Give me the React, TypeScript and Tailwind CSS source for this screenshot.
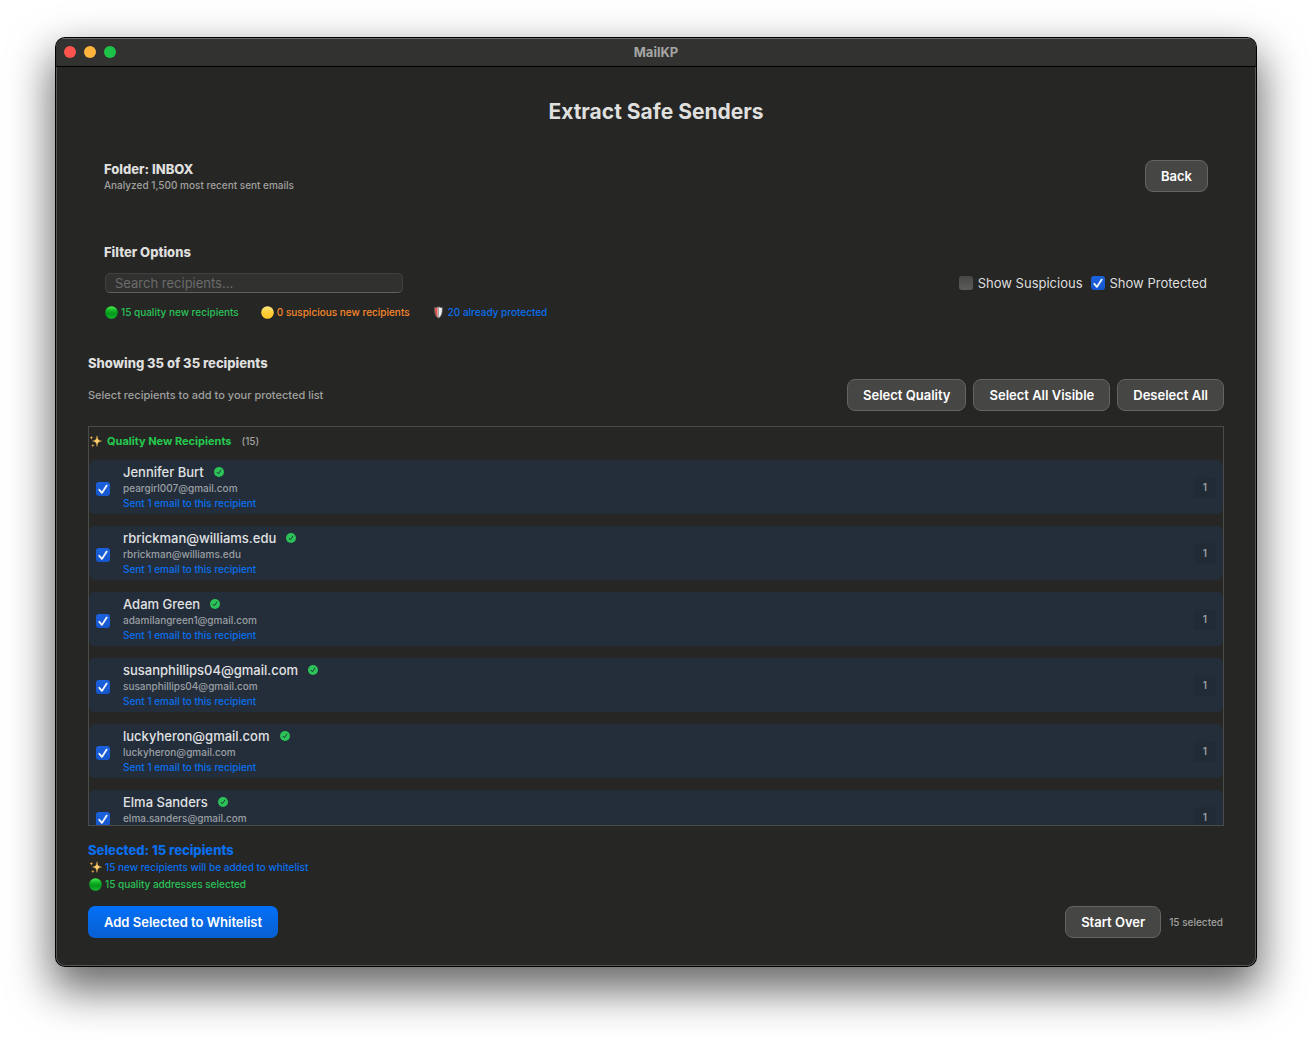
import { useState } from 'react';

type Recipient = { name: string; email: string; sent: number };

const RECIPIENTS: Recipient[] = [
  { name: 'Jennifer Burt', email: 'peargirl007@gmail.com', sent: 1 },
  { name: 'rbrickman@williams.edu', email: 'rbrickman@williams.edu', sent: 1 },
  { name: 'Adam Green', email: 'adamilangreen1@gmail.com', sent: 1 },
  { name: 'susanphillips04@gmail.com', email: 'susanphillips04@gmail.com', sent: 1 },
  { name: 'luckyheron@gmail.com', email: 'luckyheron@gmail.com', sent: 1 },
  { name: 'Elma Sanders', email: 'elma.sanders@gmail.com', sent: 1 },
];

function GreenDot() {
  return (
    <svg viewBox="0 0 13 13" className="size-[13px] shrink-0" aria-hidden="true">
      <defs>
        <linearGradient id="green-dot" x1="0" y1="0" x2="0" y2="1">
          <stop offset="0" stopColor="#4bf04f" />
          <stop offset="0.35" stopColor="#12b426" />
          <stop offset="0.6" stopColor="#06961c" />
          <stop offset="1" stopColor="#10b82c" />
        </linearGradient>
      </defs>
      <circle cx="6.5" cy="6.5" r="6.3" fill="url(#green-dot)" />
    </svg>
  );
}

function YellowDot() {
  return (
    <svg viewBox="0 0 13 13" className="size-[13px] shrink-0" aria-hidden="true">
      <defs>
        <linearGradient id="yellow-dot" x1="0" y1="0" x2="0" y2="1">
          <stop offset="0" stopColor="#ffe985" />
          <stop offset="0.5" stopColor="#ffce38" />
          <stop offset="1" stopColor="#ffc526" />
        </linearGradient>
      </defs>
      <circle cx="6.5" cy="6.5" r="6.3" fill="url(#yellow-dot)" />
    </svg>
  );
}

function Shield() {
  return (
    <svg viewBox="0 0 13 13" className="size-[13px] shrink-0" aria-hidden="true">
      <path d="M6.5 0.2 C5.2 1 3.6 1.3 2 1.2 C1.8 6 2.4 10.2 6.5 12.8 C10.6 10.2 11.2 6 11 1.2 C9.4 1.3 7.8 1 6.5 0.2Z" fill="#5a5a5a" />
      <path d="M6.2 1.2 C5.2 1.8 4.2 2 3 2 C2.9 6 3.4 9.6 6.2 11.8Z" fill="#e8524a" />
      <path d="M6.8 1.2 C7.8 1.8 8.8 2 10 2 C10.1 6 9.6 9.6 6.8 11.8Z" fill="#ececec" />
      <path d="M5.4 1.6 H6.6 V11.6 L5.4 10.8Z" fill="#c9cccd" />
    </svg>
  );
}

function Sparkles() {
  return (
    <svg viewBox="0 0 13 13" className="size-[13px] shrink-0" aria-hidden="true">
      <path d="M8 0.8 C8.5 4.6 9 5.4 12.6 6.1 C9 6.8 8.5 7.6 8 11.4 C7.5 7.6 7 6.8 3.6 6.1 C7 5.4 7.5 4.6 8 0.8Z" fill="#ffd070" stroke="#ffc850" strokeWidth="0.4" />
      <path d="M2.4 0.6 C2.6 2.2 2.9 2.5 4.4 2.8 C2.9 3.1 2.6 3.4 2.4 5 C2.2 3.4 1.9 3.1 0.4 2.8 C1.9 2.5 2.2 2.2 2.4 0.6Z" fill="#f0a94a" />
      <path d="M3.9 8.4 C4.1 9.8 4.4 10.1 5.8 10.4 C4.4 10.7 4.1 11 3.9 12.4 C3.7 11 3.4 10.7 2 10.4 C3.4 10.1 3.7 9.8 3.9 8.4Z" fill="#e2a04a" />
    </svg>
  );
}

function VerifiedIcon() {
  return (
    <svg viewBox="0 0 10 10" className="size-[10px] shrink-0" aria-hidden="true">
      <circle cx="5" cy="5" r="5" fill="#2bc257" />
      <path d="M3.1 5.3 L4.4 6.8 L6.8 3.2" fill="none" stroke="#1f3a36" strokeWidth="1" strokeLinecap="round" strokeLinejoin="round" />
    </svg>
  );
}

type CheckboxProps = {
  id: string;
  label?: string;
  checked: boolean;
  onChange: (checked: boolean) => void;
};

function Checkbox({ id, label, checked, onChange }: CheckboxProps) {
  return (
    <span className="grid size-[14px] shrink-0">
      <input
        id={id}
        type="checkbox"
        aria-label={label}
        checked={checked}
        onChange={(e) => onChange(e.target.checked)}
        className="peer col-start-1 row-start-1 size-[14px] appearance-none rounded-[3px] bg-linear-to-b from-[#484847] to-[#5c5c5b] checked:from-[#1c62df] checked:to-[#1556cc]"
      />
      <svg
        viewBox="0 0 14 14"
        className="pointer-events-none invisible col-start-1 row-start-1 size-[14px] peer-checked:visible"
        aria-hidden="true"
      >
        <path d="M3.3 7.8 L5.9 10.9 L10.7 3.6" fill="none" stroke="#f4f6fb" strokeWidth="1.8" strokeLinecap="round" strokeLinejoin="round" />
      </svg>
    </span>
  );
}

function Button({ children, onClick }: { children: string; onClick?: () => void }) {
  return (
    <button
      type="button"
      onClick={onClick}
      className="h-8 rounded-[8px] border border-[#646463] bg-[#464645] px-[15px] text-[13px] leading-4 font-semibold text-white"
    >
      {children}
    </button>
  );
}

type RowProps = {
  recipient: Recipient;
  checked: boolean;
  onChange: (checked: boolean) => void;
};

function RecipientRow({ recipient, checked, onChange }: RowProps) {
  return (
    <li className="flex items-center gap-[13px] rounded-md bg-[#242e3a] px-[7px] py-1">
      <div className="pt-1">
        <Checkbox id={recipient.email} label={recipient.name} checked={checked} onChange={onChange} />
      </div>
      <div className="flex min-w-0 flex-1 flex-col gap-0.5">
        <div className="flex items-center gap-[10px]">
          <span className="text-[13px] leading-4 font-medium text-[#e0e2e4]">{recipient.name}</span>
          <VerifiedIcon />
        </div>
        <span className="text-[10px] leading-[13px] font-medium text-[#9a9fa4]">{recipient.email}</span>
        <span className="text-[10px] leading-[13px] font-medium text-[#0a6fee]">
          Sent {recipient.sent} email to this recipient
        </span>
      </div>
      <span className="rounded-[3px] bg-[#212b35] px-[9px] py-1 text-[10px] leading-[13px] font-semibold text-[#9a9fa4]">
        {recipient.sent}
      </span>
    </li>
  );
}

export default function App() {
  const [search, setSearch] = useState('');
  const [showSuspicious, setShowSuspicious] = useState(false);
  const [showProtected, setShowProtected] = useState(true);
  const [selected, setSelected] = useState<string[]>(RECIPIENTS.map((r) => r.email));

  const toggle = (email: string, checked: boolean) =>
    setSelected((prev) => (checked ? [...prev, email] : prev.filter((e) => e !== email)));
  const selectAll = () => setSelected(RECIPIENTS.map((r) => r.email));

  return (
    <div className="min-h-screen bg-white px-14 pt-[38px] pb-[74px] font-['Inter',sans-serif]">
      <div className="overflow-hidden rounded-[9px] bg-[#262625] shadow-[inset_0_0_0_1px_#555554,0_0_0_1px_#000,0_20px_44px_4px_rgba(0,0,0,0.6)]">
        <header className="grid h-[29px] grid-cols-[1fr_auto_1fr] items-center border-b border-black bg-[#323231] px-2 shadow-[inset_0_1px_0_#6a6a69]">
          <div className="flex gap-2">
            <button type="button" aria-label="Close" className="size-3 rounded-full bg-[#ff544e]" />
            <button type="button" aria-label="Minimize" className="size-3 rounded-full bg-[#ffb43d]" />
            <button type="button" aria-label="Zoom" className="size-3 rounded-full bg-[#1fc248]" />
          </div>
          <span className="text-[13px] leading-4 font-bold text-[#a5a5a4]">MailKP</span>
        </header>

        <main className="px-8 pt-8 pb-7">
          <h1 className="text-center text-[21px] leading-[25px] font-bold text-[#dfdfde]">Extract Safe Senders</h1>

          <section className="mt-5 flex items-center justify-between p-4">
            <div>
              <h2 className="text-[13px] leading-[18px] font-extrabold text-[#dfdfde]">Folder: INBOX</h2>
              <p className="text-[10px] leading-[14px] font-medium text-[#a0a09f]">Analyzed 1,500 most recent sent emails</p>
            </div>
            <Button>Back</Button>
          </section>

          <section className="mt-5 p-4">
            <h2 className="text-[13px] leading-4 font-extrabold text-[#dfdfde]">Filter Options</h2>
            <div className="mt-[13px] flex items-center justify-between px-px">
              <input
                type="text"
                aria-label="Search recipients"
                placeholder="Search recipients..."
                value={search}
                onChange={(e) => setSearch(e.target.value)}
                className="h-5 w-[298px] rounded-[5px] border border-[#414140] border-b-[#60605f] bg-[#313130] px-[9px] text-[13px] leading-4 text-[#dfdfde] outline-none placeholder:text-[#6b6b6a]"
              />
              <div className="flex items-center gap-2 text-[13px] leading-4 text-[#dfdfde]">
                <label htmlFor="suspicious" className="flex items-center gap-[5px]">
                  <Checkbox id="suspicious" checked={showSuspicious} onChange={setShowSuspicious} />
                  Show Suspicious
                </label>
                <label htmlFor="protected" className="flex items-center gap-[5px]">
                  <Checkbox id="protected" checked={showProtected} onChange={setShowProtected} />
                  Show Protected
                </label>
              </div>
            </div>
            <div className="mt-3 flex gap-[22px] pl-px text-[10px] leading-[14px] font-medium">
              <span className="flex items-center gap-[3px] text-[#2bc257]">
                <GreenDot />
                15 quality new recipients
              </span>
              <span className="flex items-center gap-[3px] text-[#f7872c]">
                <YellowDot />
                0 suspicious new recipients
              </span>
              <span className="flex items-center gap-[3px] text-[#0a6fee]">
                <Shield />
                20 already protected
              </span>
            </div>
          </section>

          <section className="mt-5">
            <h2 className="text-[13px] leading-4 font-extrabold text-[#dfdfde]">Showing 35 of 35 recipients</h2>
            <div className="mt-2 flex items-center justify-between">
              <p className="text-[11px] leading-4 font-medium text-[#a0a09f]">Select recipients to add to your protected list</p>
              <div className="flex gap-[7px]">
                <Button onClick={selectAll}>Select Quality</Button>
                <Button onClick={selectAll}>Select All Visible</Button>
                <Button onClick={() => setSelected([])}>Deselect All</Button>
              </div>
            </div>

            <div className="mt-[15px] h-[400px] overflow-y-auto border border-[#4b4b4a] [scrollbar-width:none]">
              <div className="flex items-center pt-1.5 pb-[11px] text-[11px] leading-4">
                <Sparkles />
                <h3 className="ml-[5px] font-bold text-[#25c94e]">Quality New Recipients</h3>
                <span className="ml-[10px] text-[10px] font-medium text-[#a0a09f]">(15)</span>
              </div>
              <ul className="flex flex-col gap-3">
                {RECIPIENTS.map((recipient) => (
                  <RecipientRow
                    key={recipient.email}
                    recipient={recipient}
                    checked={selected.includes(recipient.email)}
                    onChange={(checked) => toggle(recipient.email, checked)}
                  />
                ))}
              </ul>
            </div>
          </section>

          <section className="mt-[15px]">
            <h2 className="text-[13px] leading-[18px] font-extrabold text-[#0a6fee]">Selected: 15 recipients</h2>
            <p className="flex items-center gap-[3px] pl-px text-[10px] leading-[17px] font-medium text-[#0a6fee]">
              <Sparkles />
              15 new recipients will be added to whitelist
            </p>
            <p className="flex items-center gap-[3px] pl-px text-[10px] leading-[17px] font-medium text-[#2bc257]">
              <GreenDot />
              15 quality addresses selected
            </p>
          </section>

          <footer className="mt-[13px] flex items-center justify-between">
            <button
              type="button"
              className="h-8 rounded-[7px] bg-linear-to-b from-[#0270f7] to-[#0860d2] px-4 text-[13px] leading-4 font-semibold text-white"
            >
              Add Selected to Whitelist
            </button>
            <div className="flex items-center gap-2 pr-px">
              <Button>Start Over</Button>
              <span className="text-[10px] leading-4 font-medium text-[#a0a09f]">15 selected</span>
            </div>
          </footer>
        </main>
      </div>
    </div>
  );
}
